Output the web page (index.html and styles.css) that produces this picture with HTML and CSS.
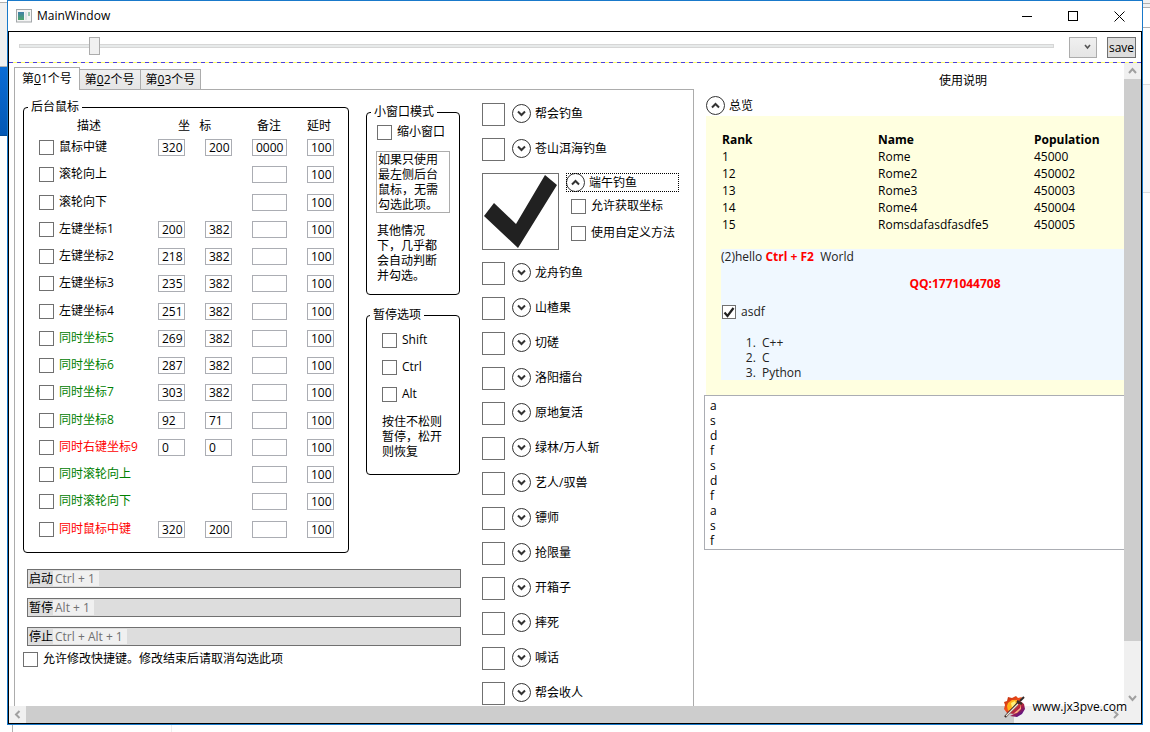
FILE: index.html
```html
<!DOCTYPE html>
<html lang="zh-CN">
<head>
<meta charset="utf-8">
<title>MainWindow</title>
<link rel="stylesheet" href="styles.css">
</head>
<body>
<svg width="0" height="0" class="defs" aria-hidden="true">
  <symbol id="down" viewBox="0 0 19 19"><circle cx="9.5" cy="9.5" r="9" fill="#fff" stroke="#333"/><path d="M6 7.5 L9.5 11 L13 7.5" fill="none" stroke="#333" stroke-width="2"/></symbol>
  <symbol id="up" viewBox="0 0 19 19"><circle cx="9.5" cy="9.5" r="9" fill="#fff" stroke="#333"/><path d="M6 11.5 L9.5 8 L13 11.5" fill="none" stroke="#333" stroke-width="2"/></symbol>
</svg>
<div class="desktop">
  <div class="behind behind-left"><div class="ribbon"></div><div class="accent"></div></div>
  <main class="window">
    <header class="titlebar">
      <svg class="app-icon" width="16" height="14" viewBox="0 0 16 14"><defs><linearGradient id="ig" x2="0" y2="1"><stop offset="0" stop-color="#3f7fa8"/><stop offset="1" stop-color="#4ea66b"/></linearGradient></defs><rect x=".5" y=".5" width="15" height="12.5" fill="#f4f4f4" stroke="#a3a7aa"/><rect x="2" y="3" width="6" height="8" fill="url(#ig)"/><rect x="9" y="3" width="2" height="8" fill="#dfe3e6"/><rect x="12" y="3" width="2" height="4" fill="#9fc9b4"/></svg>
      <h1 class="title">MainWindow</h1>
      <div class="caption">
        <button class="cap" aria-label="Minimize"><svg width="11" height="11"><path d="M0 5.5H10" stroke="#000"/></svg></button>
        <button class="cap" aria-label="Maximize"><svg width="11" height="11"><rect x=".5" y=".5" width="9" height="9" fill="none" stroke="#000"/></svg></button>
        <button class="cap" aria-label="Close"><svg width="11" height="11"><path d="M.5 .5L10.5 10.5M10.5 .5L.5 10.5" stroke="#000"/></svg></button>
      </div>
    </header>
    <div class="client">
      <div class="toolbar">
        <input class="slider" type="range" min="0" max="1000" value="68" aria-label="Opacity">
        <div class="combo"><select aria-label="Profile"><option></option></select><svg width="7" height="6" viewBox="0 0 7 6"><path d="M1 1L3.500 4L6 1" fill="none" stroke="#555" stroke-width="1.600"/></svg></div>
        <button class="save">save</button>
      </div>
      <div class="scroller">
        <div class="content">
          <section class="accounts">
            <div class="tabs" role="tablist">
              <button class="tab active" role="tab" aria-selected="true">第<u>0</u>1个号</button>
              <button class="tab" role="tab">第<u>0</u>2个号</button>
              <button class="tab" role="tab">第<u>0</u>3个号</button>
            </div>
            <div class="panel">
              <div class="left">
                <div class="groups">
                  <fieldset class="group mouse">
                    <legend>后台鼠标</legend>
                    <div class="row head"><span class="c1">描述</span><span class="c2">坐 &nbsp; 标</span><span class="c4">备注</span><span class="c5">延时</span></div>
                    <div class="rows">
                      <div class="row"><label><input type="checkbox">鼠标中键</label><input class="t" value="320" aria-label="X"><input class="t" value="200" aria-label="Y"><input class="t note" value="0000" aria-label="备注"><input class="t delay" value="100" aria-label="延时"></div>
                      <div class="row"><label><input type="checkbox">滚轮向上</label><input class="t note" aria-label="备注"><input class="t delay" value="100" aria-label="延时"></div>
                      <div class="row"><label><input type="checkbox">滚轮向下</label><input class="t note" aria-label="备注"><input class="t delay" value="100" aria-label="延时"></div>
                      <div class="row"><label><input type="checkbox">左键坐标1</label><input class="t" value="200" aria-label="X"><input class="t" value="382" aria-label="Y"><input class="t note" aria-label="备注"><input class="t delay" value="100" aria-label="延时"></div>
                      <div class="row"><label><input type="checkbox">左键坐标2</label><input class="t" value="218" aria-label="X"><input class="t" value="382" aria-label="Y"><input class="t note" aria-label="备注"><input class="t delay" value="100" aria-label="延时"></div>
                      <div class="row"><label><input type="checkbox">左键坐标3</label><input class="t" value="235" aria-label="X"><input class="t" value="382" aria-label="Y"><input class="t note" aria-label="备注"><input class="t delay" value="100" aria-label="延时"></div>
                      <div class="row"><label><input type="checkbox">左键坐标4</label><input class="t" value="251" aria-label="X"><input class="t" value="382" aria-label="Y"><input class="t note" aria-label="备注"><input class="t delay" value="100" aria-label="延时"></div>
                      <div class="row green"><label><input type="checkbox">同时坐标5</label><input class="t" value="269" aria-label="X"><input class="t" value="382" aria-label="Y"><input class="t note" aria-label="备注"><input class="t delay" value="100" aria-label="延时"></div>
                      <div class="row green"><label><input type="checkbox">同时坐标6</label><input class="t" value="287" aria-label="X"><input class="t" value="382" aria-label="Y"><input class="t note" aria-label="备注"><input class="t delay" value="100" aria-label="延时"></div>
                      <div class="row green"><label><input type="checkbox">同时坐标7</label><input class="t" value="303" aria-label="X"><input class="t" value="382" aria-label="Y"><input class="t note" aria-label="备注"><input class="t delay" value="100" aria-label="延时"></div>
                      <div class="row green"><label><input type="checkbox">同时坐标8</label><input class="t" value="92" aria-label="X"><input class="t" value="71" aria-label="Y"><input class="t note" aria-label="备注"><input class="t delay" value="100" aria-label="延时"></div>
                      <div class="row red"><label><input type="checkbox">同时右键坐标9</label><input class="t" value="0" aria-label="X"><input class="t" value="0" aria-label="Y"><input class="t note" aria-label="备注"><input class="t delay" value="100" aria-label="延时"></div>
                      <div class="row green"><label><input type="checkbox">同时滚轮向上</label><input class="t note" aria-label="备注"><input class="t delay" value="100" aria-label="延时"></div>
                      <div class="row green"><label><input type="checkbox">同时滚轮向下</label><input class="t note" aria-label="备注"><input class="t delay" value="100" aria-label="延时"></div>
                      <div class="row red"><label><input type="checkbox">同时鼠标中键</label><input class="t" value="320" aria-label="X"><input class="t" value="200" aria-label="Y"><input class="t note" aria-label="备注"><input class="t delay" value="100" aria-label="延时"></div>
                    </div>
                  </fieldset>
                  <div class="side">
                    <fieldset class="group mini">
                      <legend>小窗口模式</legend>
                      <label><input type="checkbox">缩小窗口</label>
                      <p class="boxed">如果只使用最左侧后台鼠标，无需勾选此项。</p>
                      <p class="hint">其他情况下，几乎都会自动判断并勾选。</p>
                    </fieldset>
                    <fieldset class="group pause">
                      <legend>暂停选项</legend>
                      <label><input type="checkbox">Shift</label>
                      <label><input type="checkbox">Ctrl</label>
                      <label><input type="checkbox">Alt</label>
                      <p class="hint">按住不松则暂停，松开则恢复</p>
                    </fieldset>
                  </div>
                </div>
                <div class="actions">
                  <button class="action">启动<span class="key">Ctrl + 1</span></button>
                  <button class="action">暂停<span class="key">Alt + 1</span></button>
                  <button class="action">停止<span class="key">Ctrl + Alt + 1</span></button>
                </div>
                <label class="allow"><input type="checkbox">允许修改快捷键。修改结束后请取消勾选此项</label>
              </div>
              <div class="features">
                <div class="feature"><input type="checkbox" aria-label="帮会钓鱼"><button class="exp"><svg><use href="#down"/></svg>帮会钓鱼</button></div>
                <div class="feature"><input type="checkbox" aria-label="苍山洱海钓鱼"><button class="exp"><svg><use href="#down"/></svg>苍山洱海钓鱼</button></div>
                <div class="feature open">
                  <span class="big"><input type="checkbox" checked aria-label="端午钓鱼"><svg viewBox="0 0 77 77"><path d="M2 43 L12 30 L34 51 L63 2 L75 12 L36 75 Z" fill="#212121"/></svg></span>
                  <div class="detail"><button class="exp focus"><svg><use href="#up"/></svg>端午钓鱼</button>
                    <label><input type="checkbox">允许获取坐标</label>
                    <label><input type="checkbox">使用自定义方法</label></div>
                </div>
                <div class="feature"><input type="checkbox" aria-label="龙舟钓鱼"><button class="exp"><svg><use href="#down"/></svg>龙舟钓鱼</button></div>
                <div class="feature"><input type="checkbox" aria-label="山楂果"><button class="exp"><svg><use href="#down"/></svg>山楂果</button></div>
                <div class="feature"><input type="checkbox" aria-label="切磋"><button class="exp"><svg><use href="#down"/></svg>切磋</button></div>
                <div class="feature"><input type="checkbox" aria-label="洛阳擂台"><button class="exp"><svg><use href="#down"/></svg>洛阳擂台</button></div>
                <div class="feature"><input type="checkbox" aria-label="原地复活"><button class="exp"><svg><use href="#down"/></svg>原地复活</button></div>
                <div class="feature"><input type="checkbox" aria-label="绿林/万人斩"><button class="exp"><svg><use href="#down"/></svg>绿林/万人斩</button></div>
                <div class="feature"><input type="checkbox" aria-label="艺人/驭兽"><button class="exp"><svg><use href="#down"/></svg>艺人/驭兽</button></div>
                <div class="feature"><input type="checkbox" aria-label="镖师"><button class="exp"><svg><use href="#down"/></svg>镖师</button></div>
                <div class="feature"><input type="checkbox" aria-label="抢限量"><button class="exp"><svg><use href="#down"/></svg>抢限量</button></div>
                <div class="feature"><input type="checkbox" aria-label="开箱子"><button class="exp"><svg><use href="#down"/></svg>开箱子</button></div>
                <div class="feature"><input type="checkbox" aria-label="摔死"><button class="exp"><svg><use href="#down"/></svg>摔死</button></div>
                <div class="feature"><input type="checkbox" aria-label="喊话"><button class="exp"><svg><use href="#down"/></svg>喊话</button></div>
                <div class="feature"><input type="checkbox" aria-label="帮会收人"><button class="exp"><svg><use href="#down"/></svg>帮会收人</button></div>
              </div>
            </div>
          </section>
          <section class="guide">
            <h2>使用说明</h2>
            <button class="exp overview"><svg><use href="#up"/></svg>总览</button>
            <div class="doc">
              <table>
                <thead><tr><th>Rank</th><th>Name</th><th>Population</th></tr></thead>
                <tbody>
                  <tr><td>1</td><td>Rome</td><td>45000</td></tr>
                  <tr><td>12</td><td>Rome2</td><td>450002</td></tr>
                  <tr><td>13</td><td>Rome3</td><td>450003</td></tr>
                  <tr><td>14</td><td>Rome4</td><td>450004</td></tr>
                  <tr><td>15</td><td>Romsdafasdfasdfe5</td><td>450005</td></tr>
                </tbody>
              </table>
              <div class="section">
                <p>(2)hello <b>Ctrl + F2</b>&nbsp; World</p>
                <p class="qq">QQ:1771044708</p>
                <label><span class="ticked"><input type="checkbox" checked><svg viewBox="0 0 14 14"><path d="M2.500 7.500L5.500 11L11.500 3" fill="none" stroke="#212121" stroke-width="2.200"/></svg></span>asdf</label>
                <ol><li>C++</li><li>C</li><li>Python</li></ol>
              </div>
            </div>
            <textarea class="notes" rows="10" aria-label="Notes">a
s
d
f
s
d
f
a
s
f</textarea>
          </section>
        </div>
        <div class="vbar"><svg width="17" height="16"><path d="M5 10L8.500 6L12 10" /></svg><div class="thumb"></div><svg width="17" height="17"><path d="M5 7L8.500 11L12 7"/></svg></div>
        <div class="hbar"><svg width="17" height="17"><path d="M10.500 5L7 8.500L10.500 12"/></svg><div class="thumb"></div><svg width="17" height="17"><path d="M7 5L10.500 8.500L7 12"/></svg></div>
      </div>
    </div>
  </main>
  <div class="behind behind-right"><div class="strip s1"></div><div class="strip s2"></div><div class="strip s3"></div><div class="strip s4"></div><div class="strip s5"></div></div>
  <div class="behind-bottom"></div>
</div>
<div class="watermark">
  <svg width="22" height="22" viewBox="0 0 22 22"><defs><linearGradient id="fire" x1="0" y1="0" x2=".8" y2="1"><stop offset="0" stop-color="#b3280d"/><stop offset=".45" stop-color="#f5501a"/><stop offset=".75" stop-color="#a01c4c"/><stop offset="1" stop-color="#44109a"/></linearGradient></defs><path d="M1 9L0 6L3 5L4 1L8 2L12 0L14 2L18 1L16 5L20 8L21 13L18 18L13 21L6 20L10 18L3 17L0 13Z" fill="url(#fire)"/><path d="M4 7L8 4L13 4L14 7L9 12L4 15L3 10Z" fill="#ffb31a"/><path d="M7 7L11 5L12 8L8 12Z" fill="#fff27a"/><path d="M17 8L17 13L13 17L9 18L16 12Z" fill="#ffae7d"/><path d="M1 21L15 6M13 5L18 8" stroke="#3a2d2a" stroke-width="2.500"/><path d="M2 20L14 8" stroke="#f0e3d8" stroke-width="1.300"/><path d="M16 5L20 1" stroke="#302828" stroke-width="2"/></svg>
  <span>www.jx3pve.com</span>
</div>
</body>
</html>
```
FILE: styles.css
```css
* { box-sizing: border-box; }
body { margin: 0; height: 100vh; overflow: hidden; position: relative; font: 12px/16px "Open Sans", "Noto Sans CJK SC", sans-serif; color: #000; background: #fff; }
button, input, select, textarea { font: inherit; color: inherit; margin: 0; padding: 0; border: 0; border-radius: 0; background: none; }
p, h1, h2 { margin: 0; font: inherit; }
svg { flex: none; display: block; }
.defs { position: absolute; }

.desktop { height: 100vh; display: grid; grid-template: minmax(0, 1fr) 7px / 7px minmax(0, 1fr) 7px; }
.ribbon { height: 67px; background: #f0f0f0; border-top: 2px solid #fff; border-bottom: 1px solid #b0b0b0; box-shadow: inset 0 1px #b0b0b0; }
.accent { height: 69px; background: linear-gradient(#0a6cd6, #0458b4); border-bottom: 1px solid #064a94; }
.strip { border-bottom: 1px solid #b0b0b0; }
.s1 { height: 4px; background: #f0f0f0; }
.s2 { height: 4px; background: #f0f0f0; }
.s3 { height: 20px; }
.s4 { height: 57px; border-color: #ddd; }
.s5 { height: 108px; background: #f7f8fa; border-color: #ddd; margin-bottom: 5px; }
.behind-bottom { grid-column: 1 / -1; background: linear-gradient(90deg, transparent 12px, #b0b0b0 12px 13px, transparent 13px 171px, #eee 171px 172px, transparent 172px); }

.window { display: flex; flex-direction: column; border: 1px solid #1979ca; background: #fff; min-height: 0; }
.titlebar { height: 30px; display: flex; align-items: center; gap: 5px; padding-left: 8px; }
.title { flex: 1; }
.caption { display: flex; }
.cap { width: 46px; height: 30px; display: grid; place-items: center; }
.client { flex: 1; min-height: 0; border: 1px solid #000; display: flex; flex-direction: column; }
.toolbar { height: 31px; padding: 5px 5px 0 10px; display: flex; align-items: flex-start; gap: 10px; background: repeating-linear-gradient(90deg, #4a3fe0 0 4px, #ffff66 4px 8px) bottom / 100% 1px no-repeat; }
.slider { flex: 1; min-width: 0; appearance: none; height: 18px; margin-right: 5px; }
.slider::-webkit-slider-runnable-track { height: 4px; background: #e7eaea; border: 1px solid #d6d6d6; }
.slider::-webkit-slider-thumb { appearance: none; width: 11px; height: 18px; margin-top: -8px; background: #f0f0f0; border: 1px solid #acacac; }
.combo { position: relative; width: 28px; height: 21px; }
.combo select { appearance: none; width: 100%; height: 100%; border: 1px solid #acacac; background: linear-gradient(#f0f0f0, #e5e5e5); }
.combo svg { position: absolute; right: 6px; top: 7px; pointer-events: none; }
.save { width: 29px; height: 21px; background: #ddd; border: 1px solid #707070; }

.scroller { flex: 1; min-height: 0; display: grid; grid-template: minmax(0, 1fr) 17px / minmax(0, 1fr) 17px; }
.content { overflow: hidden; display: flex; padding: 4px 0 0 5px; gap: 10px; }
.accounts { flex: none; width: 680px; display: flex; flex-direction: column; }
.tabs { display: flex; align-items: flex-end; }
.tab { height: 20px; padding: 1px 5px 0; border: 1px solid #acacac; border-bottom: 0; border-left: 0; background: linear-gradient(#f0f0f0, #e5e5e5); white-space: nowrap; }
.tab.active { height: 23px; margin-bottom: -1px; padding: 0 7px; border-left: 1px solid #acacac; background: #fff; position: relative; }
.panel { border: 1px solid #acacac; border-bottom: 0; flex: 1; display: flex; gap: 21px; padding: 9px 0 0 8px; }
.left { width: 438px; flex: none; }
.groups { display: flex; align-items: flex-start; gap: 17px; }

input[type=checkbox] { appearance: none; flex: none; width: 15px; height: 15px; border: 1px solid #707070; background: #fff; }
label { display: flex; gap: 5px; white-space: nowrap; line-height: 13px; align-items: flex-start; }
.group { margin: 0; padding: 0; border: 1px solid #000; border-radius: 4px; min-width: 0; }
.group legend { margin-left: 4px; padding: 0 3px; }
.mouse { width: 326px; height: 454px; }
.row { display: grid; grid-template-columns: 119px 47px 47px 55px 27px; padding-left: 15px; align-items: start; }
.head { height: 24px; padding-top: 3px; }
.c1 { text-align: center; padding-right: 19px; }
.c2 { grid-column: 2 / 4; padding-left: 20px; }
.c4 { padding-left: 5px; }
.c5 { white-space: nowrap; }
.rows { height: 409px; display: grid; grid-template-rows: repeat(15, 1fr); }
.rows label { padding-top: 1px; }
.t { width: 27px; height: 17px; line-height: 15px; border: 1px solid #abadb3; background: #fff; padding-left: 3px; color: #000; }
.note { grid-column: 4; width: 35px; }
.delay { grid-column: 5; }
.green { color: green; }
.red { color: red; }
.side { width: 94px; padding-top: 5px; }
.mini { height: 191px; padding-left: 10px; }
.mini legend { margin-left: -6px; }
.mini label { padding-top: 5px; }
.boxed { width: 74px; margin: 11px 0 0 -1px; border: 1px solid #acacac; padding: 0 1px; line-height: 15px; }
.hint { width: 64px; margin: 10px 0 0; line-height: 15px; }
.pause { height: 168px; margin-top: 12px; padding-left: 15px; }
.pause legend { margin-left: -12px; }
.pause label { margin-bottom: 12px; }
.pause label:first-of-type { margin-top: 10px; }
.actions { display: grid; gap: 10px; padding: 16px 0 0 4px; }
.action { height: 19px; border: 1px solid #707070; background: #ddd; display: flex; align-items: center; padding-left: 1px; }
.key { background: #f0f0f0; color: #707070; line-height: 15px; padding: 0 4px 0 2px; }
.allow { margin-top: 6px; }

.features { display: grid; gap: 12px; align-content: start; padding-top: 4px; }
.feature { display: flex; gap: 7px; align-items: flex-start; }
.feature > input { width: 23px !important; height: 23px !important; }
.exp { display: flex; align-items: center; gap: 4px; height: 19px; white-space: nowrap; }
.exp svg { width: 19px; height: 19px; }
.feature > .exp { margin-top: 1px; }
.big { position: relative; width: 77px; height: 77px; }
.big input { width: 100%; height: 100%; display: block; }
.big svg, .ticked svg { position: absolute; inset: 0; pointer-events: none; }
.focus { width: 113px; outline: 1px dotted #000; outline-offset: -1px; }
.detail label { margin: 7px 0 0 5px; }
.detail label + label { margin-top: 12px; }

.guide { flex: none; width: 518px; }
.guide h2 { text-align: center; padding-top: 6px; margin-bottom: 7px; }
.overview { margin-left: 2px; }
.doc { background: #ffffe0; margin: 1px 0 0 2px; padding: 15px; width: 498px; }
table { width: 100%; table-layout: fixed; border-collapse: collapse; line-height: 17px; }
th, td { text-align: left; padding: 0 1px; }
.section { background: #f0f8ff; margin-top: 16px; color: #222; line-height: 15px; }
.section b, .qq { color: red; font-weight: bold; }
.qq { text-align: center; padding: 12px 0 14px; }
.section label { padding-left: 1px; }
.ticked { position: relative; width: 14px; height: 14px; }
.ticked input { width: 14px; height: 14px; display: block; }
ol { margin: 16px 0 0; padding-left: 38px; }
li { padding-left: 3px; }
.notes { display: block; width: 100%; height: 155px; border: 1px solid #abadb3; padding: 2px 5px; line-height: 15px; resize: none; overflow: hidden; }

.vbar, .hbar { display: flex; background: #f0f0f0; }
.vbar { flex-direction: column; }
.hbar { grid-column: 1 / -1; padding-right: 17px; }
.vbar path, .hbar path { fill: none; stroke: #a0a0a0; stroke-width: 2; }
.thumb { background: #cdcdcd; margin-right: auto; }
.vbar .thumb { width: 17px; margin: 0 0 auto; flex: 0 0 562px; }
.hbar .thumb { flex: 0 0 988px; }
.watermark { position: absolute; right: 23px; bottom: 14px; display: flex; align-items: center; gap: 6px; text-shadow: 0 0 2px #fff, 0 0 2px #fff, 0 0 3px #fff; }
```
